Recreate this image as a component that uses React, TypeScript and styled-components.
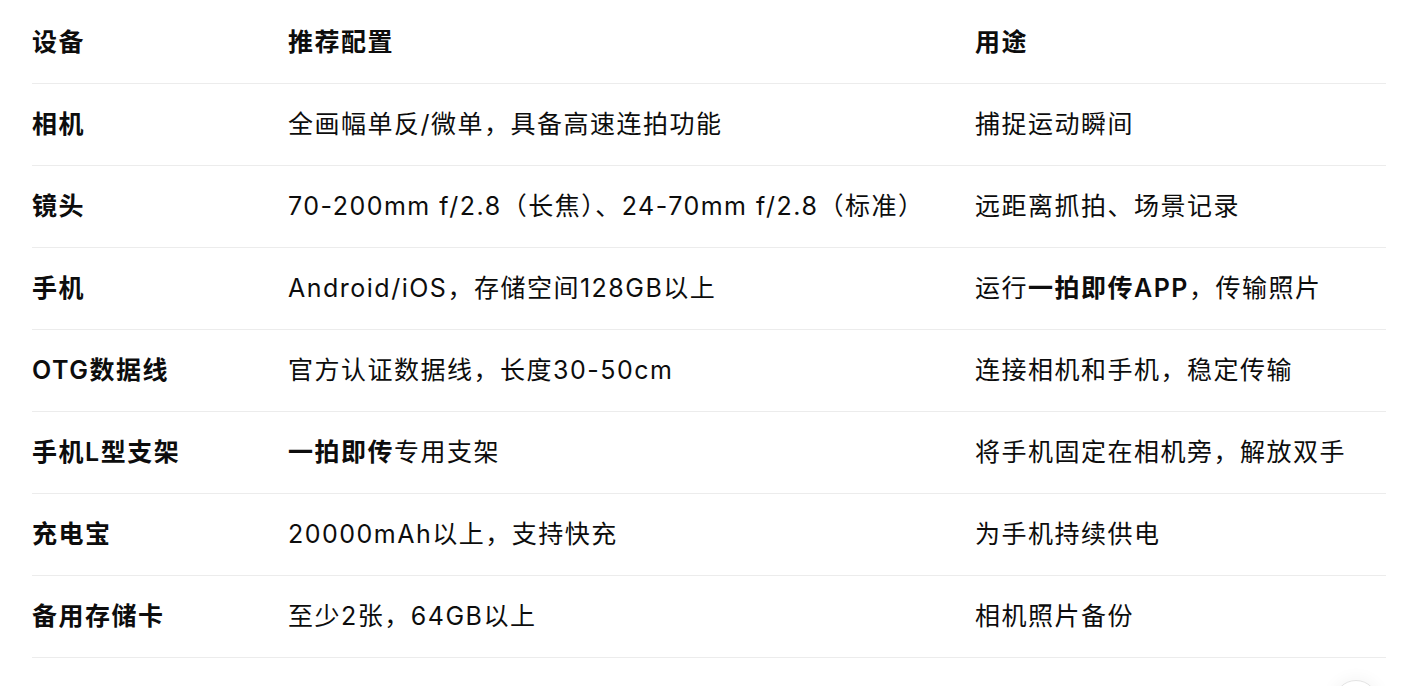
import styled, {createGlobalStyle} from 'styled-components';

const GlobalStyle = createGlobalStyle`
    html, body {
        margin: 0;
        padding: 0;
        background: #ffffff;
    }
    body {
        font-family: Inter, "Noto Sans CJK SC", sans-serif;
        color: #0d0d0d;
        overflow: hidden;
    }
`;

const Page = styled.div`
    padding: 2px 40px 0 32px;
    height: 684px;
`;

const Table = styled.table`
    width: 100%;
    border-collapse: collapse;
    table-layout: fixed;
    font-size: 25px;
    line-height: 36px;
    letter-spacing: 1.5px;
`;

const Col = styled.col<{$w: number}>`
    width: ${(props) => props.$w}px;
`;

const Row = styled.tr`
    border-bottom: 1px solid #ececec;
`;

const HeadCell = styled.th`
    text-align: left;
    font-weight: 600;
    padding: 22px 16px 23px 0;
    vertical-align: middle;
`;

const Cell = styled.td<{$strong?: boolean}>`
    text-align: left;
    font-weight: ${(props) => (props.$strong ? 600 : 400)};
    padding: 22px 16px 23px 0;
    vertical-align: middle;
    white-space: nowrap;
`;

const Bold = styled.strong`
    font-weight: 600;
`;

const FloatButton = styled.div`
    position: fixed;
    left: 1334px;
    top: 680px;
    width: 42px;
    height: 42px;
    border-radius: 50%;
    background: #ffffff;
    border: 1px solid #e3e3e3;
    box-shadow: 0 0 18px rgba(0, 0, 0, 0.06);
`;

const rows = [
    {device: '相机', config: <>全画幅单反/微单，具备高速连拍功能</>, use: <>捕捉运动瞬间</>},
    {device: '镜头', config: <>70-200mm f/2.8（长焦）、24-70mm f/2.8（标准）</>, use: <>远距离抓拍、场景记录</>},
    {device: '手机', config: <>Android/iOS，存储空间128GB以上</>, use: <>运行<Bold>一拍即传APP</Bold>，传输照片</>},
    {device: 'OTG数据线', config: <>官方认证数据线，长度30-50cm</>, use: <>连接相机和手机，稳定传输</>},
    {device: '手机L型支架', config: <><Bold>一拍即传</Bold>专用支架</>, use: <>将手机固定在相机旁，解放双手</>},
    {device: '充电宝', config: <>20000mAh以上，支持快充</>, use: <>为手机持续供电</>},
    {device: '备用存储卡', config: <>至少2张，64GB以上</>, use: <>相机照片备份</>},
];

const App = () => {
    return (
        <>
            <GlobalStyle />
            <Page>
                <Table>
                    <colgroup>
                        <Col $w={256} />
                        <Col $w={687} />
                        <Col $w={411} />
                    </colgroup>
                    <thead>
                        <Row>
                            <HeadCell>设备</HeadCell>
                            <HeadCell>推荐配置</HeadCell>
                            <HeadCell>用途</HeadCell>
                        </Row>
                    </thead>
                    <tbody>
                        {rows.map((row) => (
                            <Row key={row.device}>
                                <Cell $strong>{row.device}</Cell>
                                <Cell>{row.config}</Cell>
                                <Cell>{row.use}</Cell>
                            </Row>
                        ))}
                    </tbody>
                </Table>
            </Page>
            <FloatButton />
        </>
    );
};

export default App;
